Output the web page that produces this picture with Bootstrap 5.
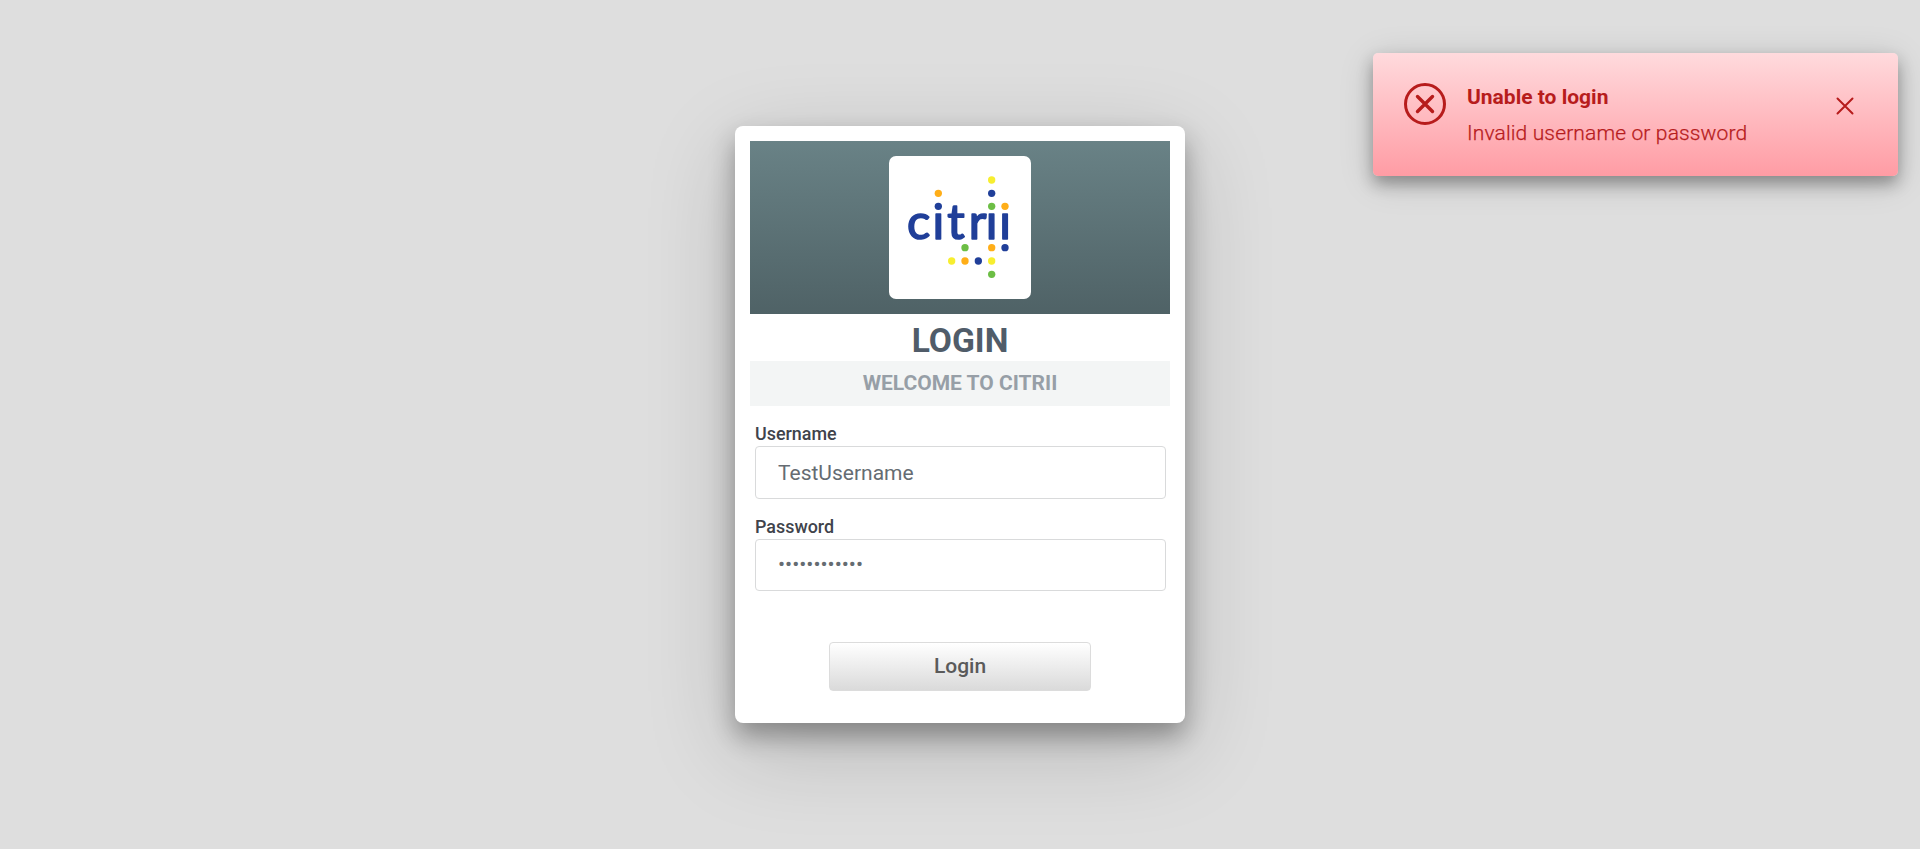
<!DOCTYPE html>
<html lang="en">
<head>
<meta charset="utf-8">
<title>Citrii Login</title>
<link href="https://cdn.jsdelivr.net/npm/bootstrap@5.3.0/dist/css/bootstrap.min.css" rel="stylesheet">
<style>
body{background:#dedede;font-family:Roboto,sans-serif;height:849px;overflow:hidden}
.login-card{width:450px;height:597px;padding:15px;border:0;border-radius:8px;box-shadow:0 13px 26px rgba(0,0,0,.32),0 25px 90px rgba(0,0,0,.18)}
.brand{height:173px;background:linear-gradient(#698286,#4f6266)}
.logo{width:142px;height:143px;border-radius:7px}
.title{font-size:33.6px;line-height:41px;padding-top:6px;font-weight:700;color:#505c69}
.welcome{font-size:21px;line-height:45px;background:#f3f5f5;color:#979fa7;font-weight:700}
.login-form{width:411px;margin:17px 0 0 5px}
.field-label{font-size:17.9px;line-height:22px;height:23px;font-weight:500;color:#40434b;margin-bottom:0}
.field{height:53px;padding:0 22px;border:1px solid #d9dadb;border-radius:4px;font-size:21px;color:#656c72}
.field-secret{height:52px;padding-bottom:2px}
.field-label.second{margin-top:17px}
.btn-login{width:262px;height:49px;margin:51px 0 0 -1px;padding:0;border:1px solid #dcdcdc;border-radius:4px;font-size:21px;font-weight:500;color:#5a5a5a;background:linear-gradient(#fff,#dadada)}
.alert-toast{right:22px;top:53px;width:525px;height:123px;padding:30px 0 0 31px;border-radius:5px;color:#b71c1c;background:linear-gradient(#ffdadd,#ff9ca4);box-shadow:0 8px 16px rgba(0,0,0,.32),0 6px 36px rgba(0,0,0,.14)}
.alert-body{margin:1px 0 0 21px}
.alert-title{font-size:21px;line-height:27px;font-weight:700}
.alert-text{font-size:21px;line-height:26px;font-weight:300;margin-top:9px;letter-spacing:.14px;-webkit-text-stroke:.25px currentColor}
.alert-close{margin:14px 44px 0 0}
</style>
<script src="https://cdn.jsdelivr.net/npm/bootstrap@5.3.0/dist/js/bootstrap.bundle.min.js"></script>
</head>
<body class="d-flex align-items-center justify-content-center">
<main class="card login-card">
  <div class="brand d-flex align-items-center justify-content-center">
    <div class="logo bg-white">
      <svg class="d-block" width="142" height="143" viewBox="27 33 426 429" role="img" aria-label="citrii">
        <text y="281" x="116 175 228 293 335 375" text-anchor="middle" font-family="Lato, sans-serif" font-weight="400" font-size="146" fill="#203f99" stroke="#203f99" stroke-width="5" stroke-linejoin="round">citrii</text>
        <path fill="#fff" d="M155 150h38v54h-38zM318 150h75v54h-75z"/>
        <g fill="#203f99"><circle cx="335" cy="145" r="11"/><circle cx="175" cy="184" r="11"/><circle cx="375" cy="308" r="11"/><circle cx="295" cy="348" r="11"/></g>
        <g fill="#ffae18"><circle cx="175" cy="145" r="11"/><circle cx="375" cy="184" r="11"/><circle cx="335" cy="308" r="11"/><circle cx="255" cy="348" r="11"/></g>
        <g fill="#f7ee30"><circle cx="335" cy="105" r="11"/><circle cx="215" cy="348" r="11"/><circle cx="335" cy="348" r="11"/></g>
        <g fill="#6cbe45"><circle cx="335" cy="184" r="11"/><circle cx="255" cy="308" r="11"/><circle cx="335" cy="388" r="11"/></g>
      </svg>
    </div>
  </div>
  <h1 class="title text-center mb-0">LOGIN</h1>
  <div class="welcome text-center">WELCOME TO CITRII</div>
  <form class="login-form d-flex flex-column">
    <label class="field-label" for="user">Username</label>
    <input class="form-control field" id="user" type="text" value="TestUsername">
    <label class="field-label second" for="pass">Password</label>
    <input class="form-control field field-secret" id="pass" type="password" value="abcdefghijkl">
    <button class="btn btn-login align-self-center" type="button">Login</button>
  </form>
</main>
<div class="alert-toast position-absolute d-flex" role="alert">
  <svg width="42" height="42" viewBox="0 0 42 42" fill="none" stroke="currentColor" stroke-width="3" stroke-linecap="round"><circle cx="21" cy="21" r="19.5"/><path stroke-width="3.4" d="M13.500 13.500l15 15M28.500 13.500l-15 15"/></svg>
  <div class="alert-body">
    <div class="alert-title">Unable to login</div>
    <div class="alert-text">Invalid username or password</div>
  </div>
  <svg class="ms-auto alert-close" width="18" height="18" viewBox="0 0 18 18" fill="none" stroke="currentColor" stroke-width="2" stroke-linecap="round"><path d="M1.500 1.500l15 15M16.500 1.500l-15 15"/></svg>
</div>
</body>
</html>
